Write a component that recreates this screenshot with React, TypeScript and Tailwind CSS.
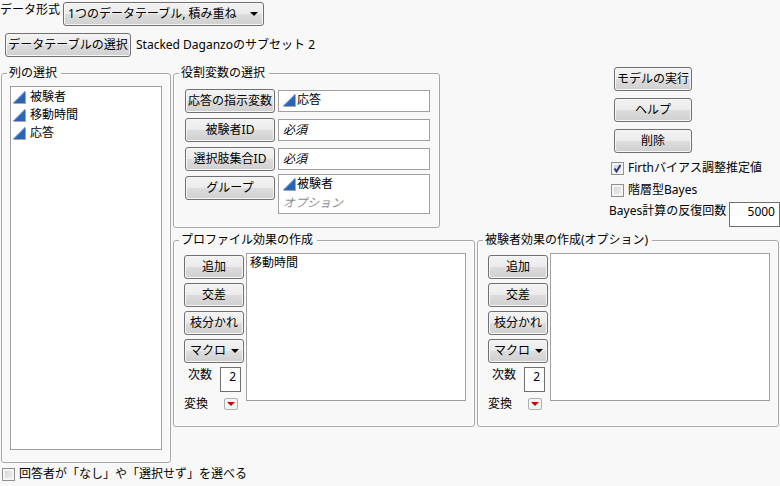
import { useState } from "react";
import type { ReactNode } from "react";
import clsx from "clsx";

const BUTTON =
    "h-6 rounded-[3px] border border-[#707070] bg-[linear-gradient(#f3f3f3,#ebebeb_50%,#dddddd_50%,#cfcfcf)] shadow-[inset_0_0_0_1px_#f6f6f6] text-center whitespace-nowrap";
const BOX = "border border-[#a0a0a0] bg-white";

function ContinuousIcon() {
    return (
        <svg width="13" height="13" viewBox="0 0 13 13" className="shrink-0" aria-hidden="true">
            <path d="M13 0V13H0L1 12H12V1Z" fill="#a8a8a8" />
            <path d="M12 0V12H0Z" fill="#2b63b3" />
            <path d="M11.5 1.5L1.5 11.5" stroke="#4f8ad2" strokeWidth="1" />
        </svg>
    );
}

function Caret() {
    return (
        <svg width="8" height="4" viewBox="0 0 8 4" className="shrink-0" aria-hidden="true">
            <path d="M0 0H8L4 4Z" fill="#000" />
        </svg>
    );
}

function Panel({ title, children }: { title: string; children: ReactNode }) {
    return (
        <fieldset className="min-w-0 rounded-[3px] border border-[#a8a8a8] px-[5px] shadow-[inset_0_0_0_1px_#fff]">
            <legend className="h-4 bg-[#f8f8f8] pr-1 pl-0.5 leading-4">{title}</legend>
            {children}
        </fieldset>
    );
}

function Variable({ name, tight }: { name: string; tight?: boolean }) {
    return (
        <li className={clsx("flex h-[18px] items-center", tight ? "gap-px" : "gap-1")}>
            <ContinuousIcon />
            {name}
        </li>
    );
}

function Check({ label, defaultChecked = false }: { label: string; defaultChecked?: boolean }) {
    const [checked, setChecked] = useState(defaultChecked);

    return (
        <label className="flex h-[22px] items-center gap-1">
            <span className="relative flex size-[13px] shrink-0">
                <input
                    type="checkbox"
                    checked={checked}
                    onChange={(e) => setChecked(e.target.checked)}
                    className="size-[13px] appearance-none border border-[#8e8f8f] bg-linear-to-br from-[#cbcfd5] to-[#f6f6f6] shadow-[inset_0_0_0_2px_#f4f4f4]"
                />
                {checked && (
                    <svg width="13" height="13" viewBox="0 0 13 13" className="pointer-events-none absolute inset-0" aria-hidden="true">
                        <path d="M3.5 6.5L5.5 9.5L9.5 3" fill="none" stroke="#31347c" strokeWidth="2" />
                    </svg>
                )}
            </span>
            {label}
        </label>
    );
}

function RoleRow({ label, tall, children }: { label: string; tall?: boolean; children: ReactNode }) {
    return (
        <div className={clsx("flex gap-[3px]", tall ? "items-start" : "mb-[5px] items-center")}>
            <button type="button" className={clsx(BUTTON, "w-[90px] shrink-0")}>{label}</button>
            <ul className={clsx(BOX, "min-w-0 flex-1 px-1", tall ? "-mt-0.5 h-10" : "h-[22px]")}>{children}</ul>
        </div>
    );
}

function EffectsPanel({ title, effects, id }: { title: string; effects: string[]; id: string }) {
    return (
        <Panel title={title}>
            <div className="flex gap-0.5 pt-[5px] pr-[3px] pb-3.5 pl-[5px]">
                <div className="flex w-[60px] shrink-0 flex-col gap-1 pt-0.5">
                    <button type="button" className={BUTTON}>追加</button>
                    <button type="button" className={BUTTON}>交差</button>
                    <button type="button" className={BUTTON}>枝分かれ</button>
                    <button type="button" aria-haspopup="menu" className={clsx(BUTTON, "flex items-center justify-between pr-1 pl-[5px]")}>
                        マクロ
                        <Caret />
                    </button>
                    <div className="flex justify-between pr-[3px] pl-1">
                        <label htmlFor={id} className="leading-4">次数</label>
                        <input id={id} defaultValue="2" className="h-[25px] w-[21px] border border-[#707070] bg-white pr-1 pb-[7px] text-right" />
                    </div>
                    <div className="flex items-center justify-between pr-1.5">
                        変換
                        <button type="button" aria-label="変換" className="flex h-3 w-3.5 items-center justify-center rounded-[2px] border border-[#b0b0b0] bg-[#f4f4f4]">
                            <svg width="8" height="4" viewBox="0 0 8 4" aria-hidden="true">
                                <path d="M0 0H8L4 4Z" fill="#d00000" />
                            </svg>
                        </button>
                    </div>
                </div>
                <ul className={clsx(BOX, "h-[148px] min-w-0 flex-1 px-[3px]")}>
                    {effects.map((effect) => (
                        <li key={effect} className="leading-[18px]">{effect}</li>
                    ))}
                </ul>
            </div>
        </Panel>
    );
}

export default function App() {
    return (
        <main className="min-h-screen bg-[#f8f8f8] pt-0.5 font-['Noto_Sans','Noto_Sans_CJK_JP',sans-serif] text-[12px] leading-4 text-black">
            <div className="flex gap-[3px]">
                <label htmlFor="format">データ形式</label>
                <div className="relative">
                    <select id="format" className={clsx(BUTTON, "w-[201px] appearance-none pr-6 pl-1 text-left!")}>
                        <option>1つのデータテーブル, 積み重ね</option>
                    </select>
                    <span className="pointer-events-none absolute inset-y-0 right-1.5 flex items-center">
                        <Caret />
                    </span>
                </div>
            </div>

            <div className="mt-[7px] flex items-center gap-[5px] pl-[5px]">
                <button type="button" className={clsx(BUTTON, "w-[126px]")}>データテーブルの選択</button>
                <span>Stacked Daganzoのサブセット 2</span>
            </div>

            <div className="mt-2 grid grid-cols-[170px_minmax(0,1fr)] items-start gap-0.5 pl-px">
                <Panel title="列の選択">
                    <ul className={clsx(BOX, "mx-[3px] mt-[5px] mb-3 h-[364px] px-0.5 pt-px")}>
                        <Variable name="被験者" />
                        <Variable name="移動時間" />
                        <Variable name="応答" />
                    </ul>
                </Panel>

                <div className="flex flex-col gap-1">
                    <div className="flex items-start justify-between">
                        <div className="w-[267px]">
                            <Panel title="役割変数の選択">
                                <div className="pt-2 pr-1 pb-[13px] pl-1.5">
                                    <RoleRow label="応答の指示変数"><Variable name="応答" tight /></RoleRow>
                                    <RoleRow label="被験者ID"><li className="italic leading-5">必須</li></RoleRow>
                                    <RoleRow label="選択肢集合ID"><li className="italic leading-5">必須</li></RoleRow>
                                    <RoleRow label="グループ" tall>
                                        <Variable name="被験者" tight />
                                        <li className="italic leading-5 text-[#8c8c8c]">オプション</li>
                                    </RoleRow>
                                </div>
                            </Panel>
                        </div>

                        <div className="flex flex-col pt-0.5">
                            <div className="mb-1 ml-[5px] flex w-[78px] flex-col gap-[7px]">
                                <button type="button" className={BUTTON}>モデルの実行</button>
                                <button type="button" className={BUTTON}>ヘルプ</button>
                                <button type="button" className={BUTTON}>削除</button>
                            </div>
                            <div className="pl-0.5">
                                <Check label="Firthバイアス調整推定値" defaultChecked />
                                <Check label="階層型Bayes" />
                            </div>
                            <div className="flex pt-px">
                                <label htmlFor="iterations" className="w-[120px] pt-px whitespace-nowrap">Bayes計算の反復回数</label>
                                <input id="iterations" defaultValue="5000" className="h-[25px] w-[51px] border border-[#707070] bg-white pr-1 pb-[7px] text-right" />
                            </div>
                        </div>
                    </div>

                    <div className="grid grid-cols-2 gap-0.5 pr-px">
                        <EffectsPanel id="degree-profile" title="プロファイル効果の作成" effects={["移動時間"]} />
                        <EffectsPanel id="degree-subject" title="被験者効果の作成(オプション)" effects={[]} />
                    </div>
                </div>
            </div>

            <div className="pl-0.5">
                <Check label="回答者が「なし」や「選択せず」を選べる" />
            </div>
        </main>
    );
}
